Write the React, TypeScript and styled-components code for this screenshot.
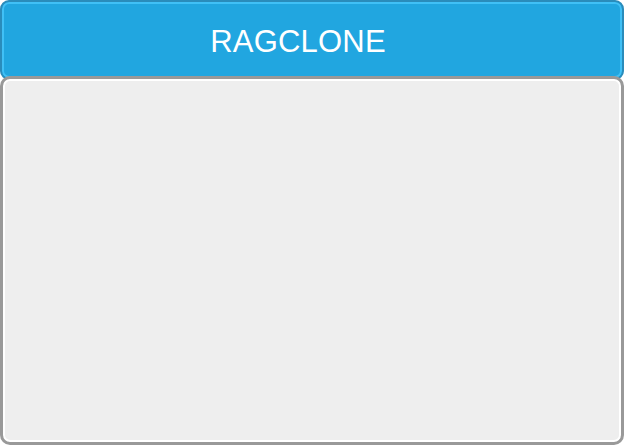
import React from "react";
import styled, { createGlobalStyle } from "styled-components";

const Global = createGlobalStyle`
  html, body { margin: 0; padding: 0; background: #ffffff; }
  body { font-family: "Liberation Sans", Arial, sans-serif; }
`;

const Frame = styled.div`
  width: 624px;
  height: 445px;
  display: flex;
  flex-direction: column;
  box-sizing: border-box;
`;

const Header = styled.header`
  flex: 0 0 auto;
  height: 80px;
  box-sizing: border-box;
  border: 2px solid #2a8cbb;
  border-radius: 9px;
  background: #21a6e0;
  box-shadow: inset 0 0 0 2px #40c0f6;
  display: flex;
  justify-content: center;
  padding: 3px 28px 0 0;
  align-items: center;
`;

const Title = styled.h1`
  margin: 0;
  font-family: "Liberation Sans", Arial, sans-serif;
  font-weight: 400;
  font-size: 31px;
  letter-spacing: 0.2px;
  color: #ffffff;
`;

const Panel = styled.main`
  flex: 1 1 auto;
  margin-top: -4px;
  position: relative;
  box-sizing: border-box;
  border: 3px solid #999999;
  border-radius: 10px;
  background: #eeeeee;
  box-shadow: inset 0 0 0 2px #ffffff;
`;

export default function App() {
  return (
    <>
      <Global />
      <Frame>
        <Header>
          <Title>RAGCLONE</Title>
        </Header>
        <Panel />
      </Frame>
    </>
  );
}
